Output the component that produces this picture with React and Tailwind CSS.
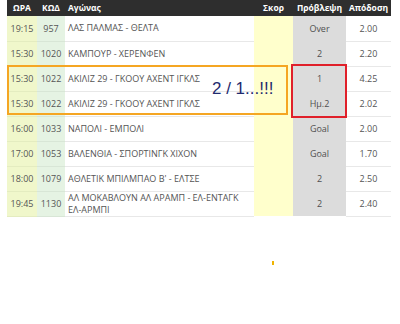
const rows = [
  { time: "19:15", code: "957", match: "ΛΑΣ ΠΑΛΜΑΣ - ΘΕΛΤΑ", tip: "Over", odd: "2.00" },
  { time: "15:30", code: "1020", match: "ΚΑΜΠΟΥΡ - ΧΕΡΕΝΦΕΝ", tip: "2", odd: "2.20" },
  { time: "15:30", code: "1022", match: "ΑΚΙΛΙΖ 29 - ΓΚΟΟΥ ΑΧΕΝΤ ΙΓΚΛΣ", tip: "1", odd: "4.25" },
  { time: "15:30", code: "1022", match: "ΑΚΙΛΙΖ 29 - ΓΚΟΟΥ ΑΧΕΝΤ ΙΓΚΛΣ", tip: "Ημ.2", odd: "2.02" },
  { time: "16:00", code: "1033", match: "ΝΑΠΟΛΙ - ΕΜΠΟΛΙ", tip: "Goal", odd: "2.00" },
  { time: "17:00", code: "1053", match: "ΒΑΛΕΝΘΙΑ - ΣΠΟΡΤΙΝΓΚ ΧΙΧΟΝ", tip: "Goal", odd: "1.70" },
  { time: "18:00", code: "1079", match: "ΑΘΛΕΤΙΚ ΜΠΙΛΜΠΑΟ Β' - ΕΛΤΣΕ", tip: "2", odd: "2.50" },
  {
    time: "19:45",
    code: "1130",
    match: (
      <>
        <span className="block">ΑΛ ΜΟΚΑΒΛΟΥΝ ΑΛ ΑΡΑΜΠ - ΕΛ-ΕΝΤΑΓΚ</span>
        <span className="block">ΕΛ-ΑΡΜΠΙ</span>
      </>
    ),
    tip: "2",
    odd: "2.40",
  },
];

const App = () => {
  return (
    <div className="relative w-[400px] h-[324px] bg-white pl-[7px] font-['Open_Sans',sans-serif] text-[9px] text-[#555]">
      <table className="table-fixed border-collapse w-[384px]">
        <colgroup>
          <col className="w-[30px]" />
          <col className="w-[28px]" />
          <col className="w-[189px]" />
          <col className="w-[39px]" />
          <col className="w-[53px]" />
          <col className="w-[45px]" />
        </colgroup>
        <thead>
          <tr className="h-[16px] bg-[#2e2e2e] text-white text-[8.5px]">
            <th className="text-center font-bold">ΩΡΑ</th>
            <th className="text-center font-bold">ΚΩΔ</th>
            <th className="text-left pl-[3px] font-bold">Αγώνας</th>
            <th className="text-center font-bold">Σκορ</th>
            <th className="text-center font-bold">Πρόβλεψη</th>
            <th className="text-center font-bold">Απόδοση</th>
          </tr>
        </thead>
        <tbody>
          {rows.map((r, i) => (
            <tr key={i} className="h-[25px]">
              <td className="bg-[#f0f7cb] border-b border-[#e4ecc0] text-center">{r.time}</td>
              <td className="bg-[#e5f3e3] border-b border-[#d8e6d6] text-center">{r.code}</td>
              <td className="border-b border-[#e8e8e8] pl-[3px] leading-[12px]">{r.match}</td>
              <td className="bg-[#ffffcc]"></td>
              <td className="bg-[#dcdcdc] text-center text-[#505050]">{r.tip}</td>
              <td className="border-b border-[#e8e8e8] text-center">{r.odd}</td>
            </tr>
          ))}
        </tbody>
      </table>

      <div className="absolute left-[7px] top-[65px] w-[281px] h-[50px] border-2 border-[#f5a623]"></div>
      <div className="absolute left-[291px] top-[64px] w-[56px] h-[54px] border-2 border-[#e0202a]"></div>
      <div className="absolute left-[212px] top-[79px] font-['Liberation_Sans',sans-serif] text-[17px] leading-[20px] text-[#1e2a6e]">
        2 / 1...!!!
      </div>
      <span className="absolute left-[272px] top-[261px] w-[2px] h-[4px] bg-[#f0b400]"></span>
    </div>
  );
};

export default App;
